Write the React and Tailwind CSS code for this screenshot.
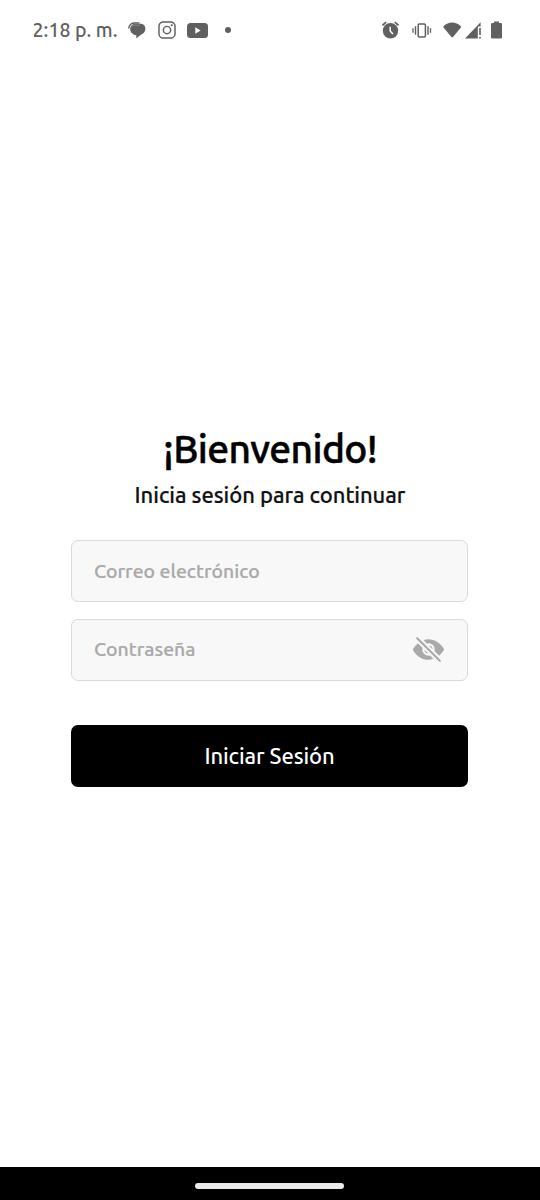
import { useState } from 'react'
import { IoEye, IoEyeOff, IoLogoInstagram } from 'react-icons/io5'

function ChatIcon() {
  return (
    <svg width="18" height="17" viewBox="0 0 18 17" fill="none">
      <path d="M.8 6C1.300 2.500 4 1 7 1h4" stroke="#606060" strokeWidth="1.400" strokeLinecap="round" />
      <path
        d="M7.500 1.800h4.500c3.500 0 5.400 2 5.400 5s-2 5-4.300 5.800L8.300 16.500v-3.300C4.500 12.500 2.200 10 2.200 7.200S4.200 1.800 7.500 1.800z"
        fill="#606060"
      />
      <path d="M3.300 5.500C4.300 3.700 6 3.200 8 3.200h4" stroke="#a5a5a5" strokeWidth="0.600" />
    </svg>
  )
}

function YoutubeIcon() {
  return (
    <svg width="21" height="15" viewBox="0 0 21 15">
      <rect width="21" height="15" rx="3.500" fill="#606060" />
      <path d="M8.300 4.300v6.400l5.300-3.200z" fill="#fff" />
    </svg>
  )
}

function AlarmIcon() {
  return (
    <svg width="18" height="18" viewBox="0 0 18 18" fill="none">
      <circle cx="8.500" cy="9.800" r="7.700" fill="#606060" />
      <path d="M.5 4.300l3.700-3.200M16.500 4.300l-3.700-3.200" stroke="#606060" strokeWidth="1.700" />
      <path d="M8.200 5.800V10l2.700 2.900" stroke="#fff" strokeWidth="1.500" />
    </svg>
  )
}

function VibrateIcon() {
  return (
    <svg width="20" height="15" viewBox="0 0 20 15" fill="none" stroke="#606060">
      <rect x="6.200" y="1" width="7.200" height="13" rx="1" strokeWidth="1.500" />
      <path d="M3.500 3.300v8.400M16 3.300v8.400" strokeWidth="1.400" />
      <path d="M1 5.300v4.400M18.500 5.300v4.400" strokeWidth="1.300" />
    </svg>
  )
}

function WifiIcon() {
  return (
    <svg width="19" height="16" viewBox="0 0 19 16">
      <path
        d="M.8 4C3 1.700 5.900.4 9.200.4S15.400 1.700 17.600 4c.6.700.6 1.200.1 1.800l-7.500 9c-.6.700-1.400.7-2 0L.7 5.800C.2 5.200.2 4.700.8 4z"
        fill="#606060"
      />
    </svg>
  )
}

function SignalIcon() {
  return (
    <svg width="17" height="17" viewBox="0 0 17 17" fill="#606060">
      <path d="M0 16.500L15.600.3v4.200h-2.800v12z" />
      <path d="M14.200 6h1.600v7h-1.600zM14.200 14.700h1.600v1.800h-1.600z" />
    </svg>
  )
}

function BatteryIcon() {
  return (
    <svg width="11" height="18" viewBox="0 0 11 18" fill="#606060">
      <path d="M3 .5h5V2h1.700c.8 0 1.300.5 1.300 1.300v12.900c0 .8-.5 1.300-1.300 1.300H1.300C.5 17.500 0 17 0 16.200V3.300C0 2.500.5 2 1.300 2H3z" />
    </svg>
  )
}

function StatusBar() {
  return (
    <header className="flex h-[60px] shrink-0 items-center justify-between pr-[38px] pl-[32.5px] text-[#606060]">
      <div className="flex items-center">
        <span className="w-[86.5px] text-[19.5px] leading-[30px] font-medium tracking-[0.05px] whitespace-nowrap">
          2:18 p. m.
        </span>
        <span className="ml-[9px]"><ChatIcon /></span>
        <IoLogoInstagram size={20} className="ml-[11px]" />
        <span className="ml-[10px]"><YoutubeIcon /></span>
        <span className="ml-[17px] size-1.5 rounded-full bg-[#606060]" />
      </div>
      <div className="flex items-center">
        <AlarmIcon />
        <span className="ml-3"><VibrateIcon /></span>
        <span className="ml-[11px]"><WifiIcon /></span>
        <span className="ml-[3px]"><SignalIcon /></span>
        <span className="ml-[9px]"><BatteryIcon /></span>
      </div>
    </header>
  )
}

const fieldClass =
  'flex h-[62px] items-center rounded-[7px] border border-[#dadada] bg-[#f8f8f8] px-[22px]'
const inputClass =
  'min-w-0 flex-1 bg-transparent text-[19.4px] font-medium text-black outline-none placeholder:text-[#a9a9a9] [-webkit-text-stroke:0.2px]'

export default function App() {
  const [email, setEmail] = useState('')
  const [password, setPassword] = useState('')
  const [visible, setVisible] = useState(false)

  return (
    <div className="flex h-[1200px] w-[540px] flex-col bg-white font-['Ubuntu','Noto_Sans',sans-serif]">
      <StatusBar />

      <main className="flex-1 pt-[364px] pr-[72px] pl-[71px]">
        <h1 className="pl-px text-center text-[39px] leading-[50px] font-medium tracking-[-0.6px] text-black [-webkit-text-stroke:0.5px]">
          ¡Bienvenido!
        </h1>
        <p className="mt-[6px] pl-px text-center text-[22px] leading-[30px] font-medium tracking-[-0.05px] text-[#111111] [-webkit-text-stroke:0.2px]">
          Inicia sesión para continuar
        </p>

        <form onSubmit={(e) => e.preventDefault()} className="mt-[30px]">
          <div className={`${fieldClass} pt-px`}>
            <input
              type="email"
              value={email}
              onChange={(e) => setEmail(e.target.value)}
              placeholder="Correo electrónico"
              className={inputClass}
            />
          </div>

          <div className={`${fieldClass} mt-[17px]`}>
            <input
              type={visible ? 'text' : 'password'}
              value={password}
              onChange={(e) => setPassword(e.target.value)}
              placeholder="Contraseña"
              className={inputClass}
            />
            <button type="button" onClick={() => setVisible(!visible)} className="pb-0.5 text-[#a9a9a9]">
              {visible ? <IoEye size={33} /> : <IoEyeOff size={33} />}
            </button>
          </div>

          <button
            type="submit"
            className="mt-[44px] h-[62px] w-full rounded-[7px] bg-black pb-0.5 text-[22px] font-medium tracking-[-0.1px] text-white"
          >
            Iniciar Sesión
          </button>
        </form>
      </main>

      <footer className="flex h-[33px] shrink-0 items-center justify-center bg-black pt-1 pr-px">
        <div className="h-1.5 w-[149px] rounded-full bg-[#ebebeb]" />
      </footer>
    </div>
  )
}
